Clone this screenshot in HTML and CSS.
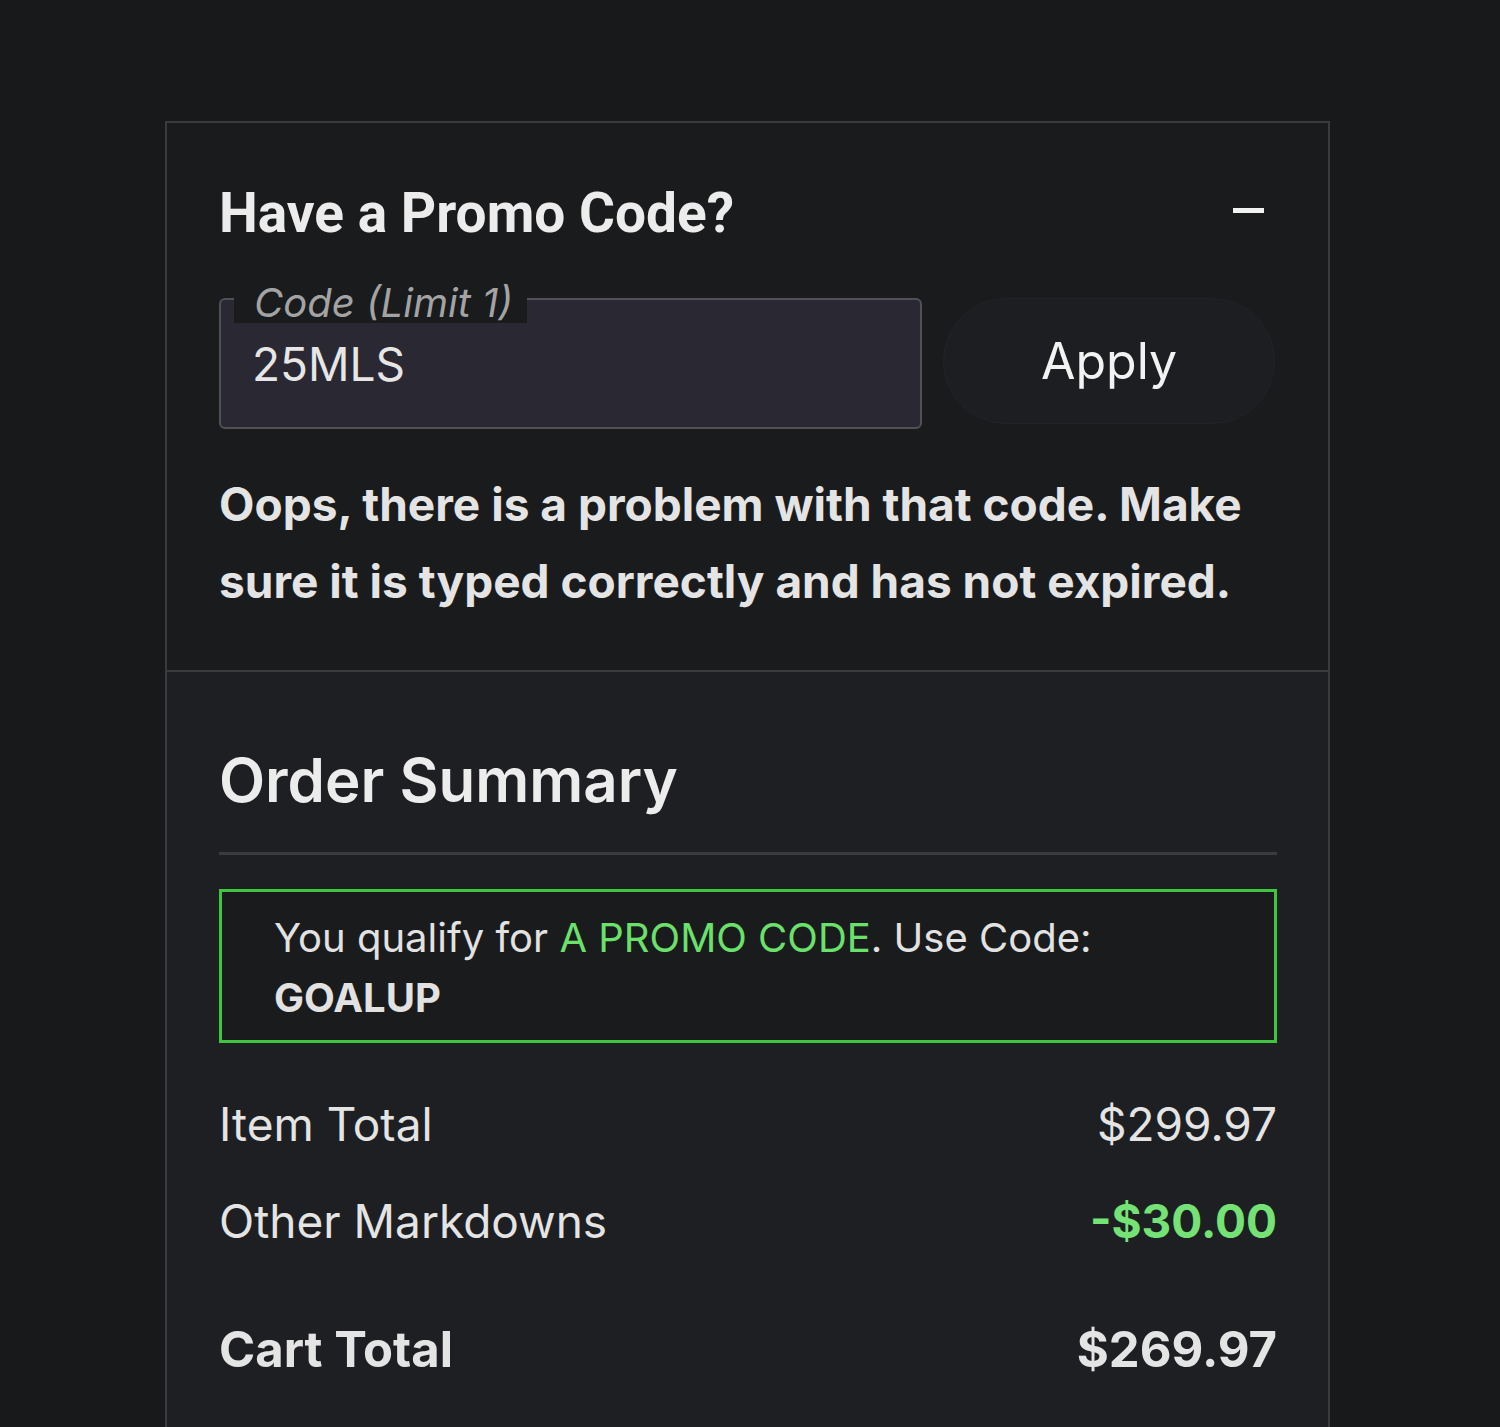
FILE: index.html
```html
<!DOCTYPE html>
<html lang="en">
<head>
<meta charset="utf-8">
<title>Cart</title>
<link rel="stylesheet" href="styles.css">
</head>
<body>
<div class="page">
  <div class="panel">
    <section class="promo">
      <div class="promo-head">
        <h2 class="promo-title">Have a Promo Code?</h2>
        <span class="minus" aria-label="collapse"></span>
      </div>
      <div class="promo-form">
        <div class="field">
          <span class="field-label">Code (Limit 1)</span>
          <span class="field-value">25MLS</span>
        </div>
        <button class="apply">Apply</button>
      </div>
      <p class="error">Oops, there is a problem with that code. Make sure it is typed correctly and has not expired.</p>
    </section>
    <section class="summary">
      <h2 class="summary-title">Order Summary</h2>
      <hr class="rule">
      <div class="qualify">
        You qualify for <span class="green">A PROMO CODE</span>. Use Code:<br>
        <strong>GOALUP</strong>
      </div>
      <div class="rows">
        <div class="row"><span>Item Total</span><span>$299.97</span></div>
        <div class="row"><span>Other Markdowns</span><span class="discount">-$30.00</span></div>
        <div class="row total"><span>Cart Total</span><span>$269.97</span></div>
      </div>
    </section>
  </div>
</div>
</body>
</html>
```
FILE: styles.css
```css
html, body {
  margin: 0;
  padding: 0;
  background: #18191b;
}
body {
  font-family: Inter, "Noto Sans", sans-serif;
  color: #e8e8e8;
  overflow: hidden;
}
.page {
  padding: 121px 0 0 165px;
}
.panel {
  width: 1161px;
  border: 2px solid #3a3b3e;
  border-bottom: none;
  height: 1306px;
  display: flex;
  flex-direction: column;
}
.promo {
  background: #1a1b1d;
  padding: 58px 51px 50px 52px;
}
.promo-head {
  display: flex;
  justify-content: space-between;
  align-items: center;
}
.promo-title {
  margin: 0;
  font-family: Roboto, Inter, sans-serif;
  font-size: 55px;
  line-height: 65px;
  font-weight: 700;
  color: #ececec;
}
.minus {
  width: 31px;
  height: 5px;
  background: #f2f2f2;
  margin: 0 13px 6px 0;
}
.promo-form {
  display: flex;
  gap: 21px;
  margin-top: 52px;
  align-items: flex-start;
}
.field {
  position: relative;
  box-sizing: border-box;
  width: 703px;
  height: 131px;
  background: #2a2933;
  border: 2px solid #505056;
  border-radius: 6px;
  display: flex;
  align-items: center;
  padding-left: 31px;
}
.field-label {
  position: absolute;
  left: 13px;
  top: -17px;
  background: #1a1b1d;
  padding: 0 14px 0 20px;
  font-size: 40px;
  line-height: 40px;
  font-style: italic;
  color: #a3a3a3;
}
.field-value {
  font-size: 46px;
  color: #e6e6e6;
}
.apply {
  width: 332px;
  height: 126px;
  border-radius: 63px;
  background: #1d1e21;
  border: 1px solid #222326;
  color: #f2f2f2;
  font-family: inherit;
  font-size: 50px;
  padding: 0;
}
.error {
  margin: 37px 0 0;
  font-size: 46px;
  line-height: 77px;
  font-weight: 700;
  color: #e4e4e4;
}
.summary {
  flex: 1;
  background: #1e1f22;
  border-top: 2px solid #3a3b3e;
  padding: 70px 51px 0 52px;
}
.summary-title {
  margin: 0;
  font-size: 60px;
  line-height: 77px;
  font-weight: 600;
  color: #ececec;
}
.rule {
  margin: 33px 0 0;
  border: none;
  height: 3px;
  background: #3a3b3e;
}
.qualify {
  margin-top: 34px;
  border: 3px solid #3ec63e;
  background: #1a1b1d;
  padding: 16px 52px 12px 52px;
  font-size: 40px;
  line-height: 60px;
  color: #e2e2e2;
}
.qualify strong {
  font-weight: 700;
}
.green {
  color: #6be06b;
}
.rows {
  margin-top: 51px;
  display: flex;
  flex-direction: column;
  gap: 37px;
}
.row {
  display: flex;
  justify-content: space-between;
  align-items: center;
  font-size: 46px;
  line-height: 60px;
  color: #e4e4e4;
}
.discount {
  color: #74e274;
  font-weight: 700;
}
.row.total {
  margin-top: 32px;
  font-size: 49px;
  font-weight: 700;
}
```
